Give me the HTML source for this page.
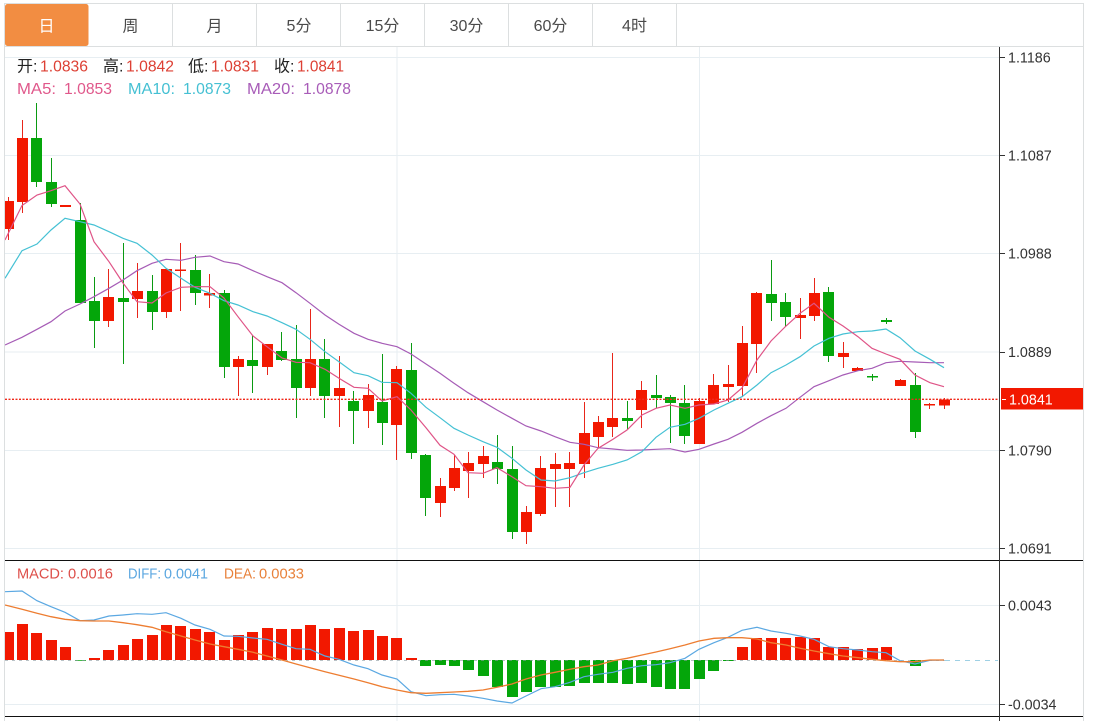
<!DOCTYPE html>
<html><head><meta charset="utf-8"><title>K</title>
<style>
html,body{margin:0;padding:0;background:#fff;overflow:hidden;width:1099px;height:721px}
svg{display:block}
text{font-family:"Liberation Sans","Noto Sans CJK SC",sans-serif;font-size:14px}
.l text{font-size:16px}
.m text{font-size:15px}
.a text{font-size:14.3px}
</style></head><body>
<svg width="1099" height="721" viewBox="0 0 1099 721" xmlns="http://www.w3.org/2000/svg">
<defs><clipPath id="c"><rect x="5" y="47" width="994" height="674"/></clipPath></defs>
<!-- grid -->
<path d="M5 57.5H999M5 155.5H999M5 253.5H999M5 352H999M5 450.5H999M5 548.5H999M5 605.5H999M5 704.5H999M397 47V721M699.5 47V721" stroke="#e7eef2" stroke-width="1" fill="none"/>
<!-- frame -->
<path d="M4.5 3V721M4 3.5H1083.5V721M5 46.5H1083" stroke="#dcdfe0" fill="none"/>
<!-- tabs -->
<rect x="5" y="4" width="83.5" height="42" rx="2.5" fill="#f28d42"/>
<path d="M172.5 4V46M256.5 4V46M340.5 4V46M424.5 4V46M508.5 4V46M592.5 4V46M676.5 4V46" stroke="#dcdfe0" fill="none"/>
<g class="l" text-anchor="middle" fill="#4a4a4a">
<text x="46.5" y="31.500" fill="#fff">日</text>
<text x="130.5" y="31.500">周</text>
<text x="214.5" y="31.500">月</text>
<text x="299" y="31">5分</text>
<text x="382.5" y="31">15分</text>
<text x="466.5" y="31">30分</text>
<text x="550.5" y="31">60分</text>
<text x="634.5" y="31">4时</text>
</g>
<g clip-path="url(#c)">
<!-- red wicks -->
<path stroke="#e8261a" stroke-width="1" fill="none" d="M8.5 197V240M22.5 120V213M108.5 269V327M137.5 263V318M166.5 269V318M180.5 243V311M209.5 274V308M238.5 356V396M267.5 344V375M310.5 309V396M339.5 356V427M368.5 384V428M396.5 366V460M440.5 478V517M454.5 455V491M468.5 452V498M483.5 446V478M526.5 506V544M540.5 456V516M555.5 453V507M569.5 452V507M584.5 402V478M598.5 416V448M612.5 353V437M641.5 381V428M699.5 398V444M713.5 374V404M728.5 365V402M742.5 326V397M756.5 292V373M800.5 298V339M814.5 278V321M843.5 342V368M857.5 367V371M900.5 379V386M929.5 403V409M944.5 398V409"/>
<!-- red bodies -->
<path fill="#f21800" d="M5 201H14V229H5ZM17 138H28V202H17ZM60 205H71V207H60ZM103 297H114V321H103ZM132 291H143V299H132ZM161 269H172V312H161ZM175 269.5H186V271H175ZM204 293H215V295.500H204ZM233 359H244V367H233ZM262 344H273V367H262ZM305 359H316V388H305ZM334 388H345V396H334ZM363 395H374V411H363ZM391 369H402V425H391ZM435 486H446V503H435ZM449 468H460V488H449ZM463 463H474V471H463ZM478 456H489V464H478ZM521 512H532V532H521ZM535 468H546V514H535ZM550 464H561V469H550ZM564 463H575V469H564ZM579 433H590V464H579ZM593 422H604V437H593ZM607 418H618V427H607ZM636 390H647V410H636ZM694 401H705V444H694ZM708 385H719V404H708ZM723 384H734V387H723ZM737 343H748V386H737ZM751 293H762V344H751ZM795 315H806V318H795ZM809 293H820V316H809ZM838 353H849V357H838ZM852 368H863V371H852ZM895 380H906V386H895ZM924 404H935V405.500H924ZM939 399.500H950V405.500H939Z"/>
<!-- green wicks -->
<path stroke="#0a9a12" stroke-width="1" fill="none" d="M36.500 103V187M51.500 158V207M80.500 203V303M94.500 277V348M123.500 243V364M152.500 275V330M195.500 255V305M224.500 290V378M252.500 335V393M281.500 332V361M296.500 325V418M324.500 339V418M353.500 391V444M382.500 354V445M411.500 343V459M425.500 454V516M497.500 435V484M512.500 446V539M627.500 401V430M656.500 375V408M670.500 395V443M684.500 385V444M771.500 260V321M785.500 293V327M828.500 287V362M872.500 374V381M886.500 318V324M915.500 373V438"/>
<!-- green bodies -->
<path fill="#04a60a" d="M31 138H42V182H31ZM46 182H57V204H46ZM75 220H86V303H75ZM89 301H100V321H89ZM118 298H129V302H118ZM147 291H158V312H147ZM190 270H201V293H190ZM219 293H230V367H219ZM247 360H258V366H247ZM276 351H287V360H276ZM291 359H302V388H291ZM319 359H330V396H319ZM348 401H359V411H348ZM377 402H388V423H377ZM406 370H417V453H406ZM420 455H431V498H420ZM492 462H503V469H492ZM507 469H518V532H507ZM622 418H633V421H622ZM651 395H662V398H651ZM665 397H676V403H665ZM679 403H690V436H679ZM766 294H777V303H766ZM780 302H791V317H780ZM823 292H834V356H823ZM867 376H878V377.500H867ZM881 320H892V322H881ZM910 385H921V432H910Z"/>
<!-- MACD bars -->
<path fill="#f21800" d="M5 632H14V660H5ZM17 624H28V660H17ZM31 633H42V660H31ZM46 640H57V660H46ZM60 647H71V660H60ZM89 658H100V660H89ZM103 650H114V660H103ZM118 645H129V660H118ZM132 639H143V660H132ZM147 635H158V660H147ZM161 625H172V660H161ZM175 626H186V660H175ZM190 629H201V660H190ZM204 632H215V660H204ZM219 640H230V660H219ZM233 635H244V660H233ZM247 632H258V660H247ZM262 628H273V660H262ZM276 629H287V660H276ZM291 629H302V660H291ZM305 625H316V660H305ZM319 629H330V660H319ZM334 628H345V660H334ZM348 631H359V660H348ZM363 630H374V660H363ZM377 636H388V660H377ZM391 638H402V660H391ZM406 658H417V660H406ZM737 647H748V660H737ZM751 638H762V660H751ZM766 638H777V660H766ZM780 638H791V660H780ZM795 637H806V660H795ZM809 638H820V660H809ZM823 647H834V660H823ZM838 647H849V660H838ZM852 649H863V660H852ZM867 648H878V660H867ZM881 647H892V660H881Z"/>
<path fill="#04a60a" d="M420 660H431V666H420ZM435 660H446V665H435ZM449 660H460V666H449ZM463 660H474V670H463ZM478 660H489V676H478ZM492 660H503V687H492ZM507 660H518V697H507ZM521 660H532V692H521ZM535 660H546V687H535ZM550 660H561V687H550ZM564 660H575V686H564ZM579 660H590V683H579ZM593 660H604V683H593ZM607 660H618V683H607ZM622 660H633V684H622ZM636 660H647V683H636ZM651 660H662V687H651ZM665 660H676V689H665ZM679 660H690V689H679ZM694 660H705V679H694ZM708 660H719V671H708ZM723 660H734V661H723ZM910 660H921V666H910ZM75 660H86V660.800H75Z"/>
<path d="M5 660.500H945" stroke="#8a9aa0" stroke-width="1" stroke-dasharray="3 4" fill="none" opacity=".6"/>
<path d="M945 660.500H998" stroke="#9fd0e4" stroke-width="1" stroke-dasharray="5 5" fill="none"/>
<!-- MA lines -->
<polyline fill="none" stroke="#a65cb6" stroke-width="1.200" points="5,345 22,337.300 37,329.300 51,321.700 65,311 80,304 94,296.700 109,288.300 123,280 137,270.700 152,263.300 166,259.300 181,260.300 195,257.300 210,256 224,261.700 238,264 253,270.700 267,276.700 282,282.700 296,292.700 310,303.300 325,315 339,324.300 354,333.300 368,339.300 382,343.300 397,346.700 411,354 426,364 440,373.300 454,383.300 468,392.700 483,401.700 497,410 512,418.300 526,426 541,431 555,436.700 570,442.300 584,444.300 598,447.700 613,449 627,450.300 642,450 656,449.300 670,448.700 685,452 699,449.300 714,444 728,439.300 742,432.300 757,423.300 771,415.700 786,408.300 800,397.300 814,386.700 829,380.700 843,375 858,370.700 872,368.300 886,362.700 900,361.300 915,362 930,362.700 944,362.700"/>
<polyline fill="none" stroke="#45c1d4" stroke-width="1.200" points="5,278.300 22,250.700 37,244 51,230 65,218.300 80,221.700 94,225 109,231.700 123,238.300 137,243.300 152,255 166,268.300 181,278.300 195,287.300 210,293.300 224,300.700 238,305 253,311.700 267,316 282,322.700 296,329.300 310,339.300 325,351.700 339,361.700 354,372.700 368,375.700 382,382.300 397,382.700 411,393.300 426,407.300 440,417.700 454,428.300 468,435 483,441.700 497,447.300 512,458.300 526,470 541,480 555,481 570,477.700 584,472.700 598,468.300 613,464.300 627,460 642,451.700 656,437.300 670,427.300 685,424.300 699,418.300 714,410 728,403.300 742,396.700 757,385 771,372.700 786,365 800,356.700 814,346 829,338.300 843,334 858,331.700 872,331 886,329 900,337.700 915,351 930,359.300 944,367.700"/>
<polyline fill="none" stroke="#df5487" stroke-width="1.200" points="5,240 22,205.500 37,195 51,190.700 65,185.700 80,204 94,241.700 109,261.700 123,283 137,301.700 152,303 166,293 181,287.300 195,286.700 210,286.700 224,298 238,316.700 253,336 267,346.700 282,358 296,362.300 310,362.700 325,369.300 339,378.300 354,387.300 368,388.300 382,401 397,396.700 411,410 426,427.700 440,445.300 454,454.300 468,472.700 483,473.300 497,467.700 512,476.700 526,485.700 541,486.700 555,488.300 570,487.300 584,465 598,448.300 613,439.300 627,430 642,415 656,408.300 670,405 685,408.300 699,405 714,404 728,400 742,388 757,360 771,341 786,326 800,313.300 814,303.300 829,317.300 843,326 858,336.700 872,348.300 886,354 900,359.300 915,375 930,382.700 944,386.700"/>
<!-- DIFF / DEA -->
<polyline fill="none" stroke="#5ba8e2" stroke-width="1.200" points="5,591.700 22,591 37,600.700 51,606.700 65,612.300 80,620.700 94,620 109,616 123,615 137,613.700 152,614.300 166,612.700 181,618.300 195,625 210,629.300 224,636 238,636.300 253,638 267,639.300 282,644.300 296,648.700 310,649.300 325,656 339,659.300 354,665 368,668.700 382,675 397,679 411,691.700 426,695.700 440,694.700 454,694.300 468,696 483,698.300 497,701 512,703 526,696 541,688.700 555,686.700 570,682.300 584,676.700 598,674.300 613,672.300 627,668.300 642,665.700 656,664.700 670,662.700 685,658.300 699,649.300 714,642.700 728,637.300 742,630.300 757,627.300 771,631 786,633.300 800,636 814,639.300 829,646.700 843,648.700 858,650 872,651.700 886,652.700 900,660.700 915,664 930,660.300 944,660"/>
<polyline fill="none" stroke="#ed7d31" stroke-width="1.300" points="5,605 22,609.300 37,613.300 51,616.700 65,619.300 80,620.700 94,621 109,621 123,622.700 137,624.700 152,627.300 166,631.700 181,636 195,640 210,644 224,646.700 238,649.300 253,652.300 267,656 282,660 296,664 310,667.700 325,671.700 339,675.300 354,679 368,682.700 382,686.700 397,690 411,692.700 426,693.300 440,692.700 454,692 468,691.300 483,690 497,687.300 512,684 526,679 541,675 555,672.300 570,669.300 584,666.700 598,665 613,660.700 627,658.300 642,655 656,652 670,648.700 685,645 699,641 714,638.300 728,637.700 742,637.700 757,639 771,642.700 786,645 800,648.300 814,651 829,653.700 843,656 858,657.700 872,659.300 886,660.700 900,661.700 915,661.700 930,660 944,660"/>
<!-- dotted price -->
<path d="M5 399.300H999" stroke="#f0281a" stroke-width="1.300" stroke-dasharray="2 1.500" fill="none"/>
</g>
<!-- black rules + axis -->
<path d="M5 560.500H1083M5 716.500H1083" stroke="#111" fill="none"/>
<path d="M999.500 47V721" stroke="#333" fill="none"/>
<path d="M999 57.500H1005M999 155.500H1005M999 253.500H1005M999 352.500H1005M999 450.500H1005M999 548.500H1005M999 605.500H1005M999 704.500H1005" stroke="#333" fill="none"/>
<!-- price box -->
<rect x="1001" y="388" width="82" height="21.500" fill="#f21800"/>
<path d="M1002 399.500H1006" stroke="#fff"/>
<!-- axis labels -->
<g class="a" fill="#333">
<text x="1008" y="62.500">1.1186</text>
<text x="1008" y="160.500">1.1087</text>
<text x="1008" y="258.500">1.0988</text>
<text x="1008" y="357">1.0889</text>
<text x="1008" y="455.500">1.0790</text>
<text x="1008" y="553.500">1.0691</text>
<text x="1008" y="610.500">0.0043</text>
<text x="1008" y="709.500">-0.0034</text>
<text x="1009" y="404.500" fill="#fff">1.0841</text>
</g>
<!-- legends -->
<g class="l">
<text x="17" y="71.500" fill="#222">开:</text><text x="40" y="71.500" fill="#dd4034" textLength="48" lengthAdjust="spacingAndGlyphs">1.0836</text>
<text x="103" y="71.500" fill="#222">高:</text><text x="126" y="71.500" fill="#dd4034" textLength="48" lengthAdjust="spacingAndGlyphs">1.0842</text>
<text x="188" y="71.500" fill="#222">低:</text><text x="211" y="71.500" fill="#dd4034" textLength="48" lengthAdjust="spacingAndGlyphs">1.0831</text>
<text x="274" y="71.500" fill="#222">收:</text><text x="297" y="71.500" fill="#dd4034" textLength="47" lengthAdjust="spacingAndGlyphs">1.0841</text>
<g fill="#e0588b"><text x="17" y="94" textLength="39" lengthAdjust="spacingAndGlyphs">MA5:</text><text x="64" y="94" textLength="48" lengthAdjust="spacingAndGlyphs">1.0853</text></g>
<g fill="#45c0d3"><text x="128" y="94" textLength="47" lengthAdjust="spacingAndGlyphs">MA10:</text><text x="183" y="94" textLength="48" lengthAdjust="spacingAndGlyphs">1.0873</text></g>
<g fill="#a85cb8"><text x="247" y="94" textLength="48" lengthAdjust="spacingAndGlyphs">MA20:</text><text x="303" y="94" textLength="48" lengthAdjust="spacingAndGlyphs">1.0878</text></g>
</g>
<g class="m">
<g fill="#dd4f4a"><text x="17" y="578.500" textLength="47" lengthAdjust="spacingAndGlyphs">MACD:</text><text x="68" y="578.500" textLength="45" lengthAdjust="spacingAndGlyphs">0.0016</text></g>
<g fill="#5ba7e0"><text x="128" y="578.500" textLength="33" lengthAdjust="spacingAndGlyphs">DIFF:</text><text x="164" y="578.500" textLength="44" lengthAdjust="spacingAndGlyphs">0.0041</text></g>
<g fill="#e8813a"><text x="224" y="578.500" textLength="32" lengthAdjust="spacingAndGlyphs">DEA:</text><text x="259" y="578.500" textLength="45" lengthAdjust="spacingAndGlyphs">0.0033</text></g>
</g>
</svg>
</body></html>
